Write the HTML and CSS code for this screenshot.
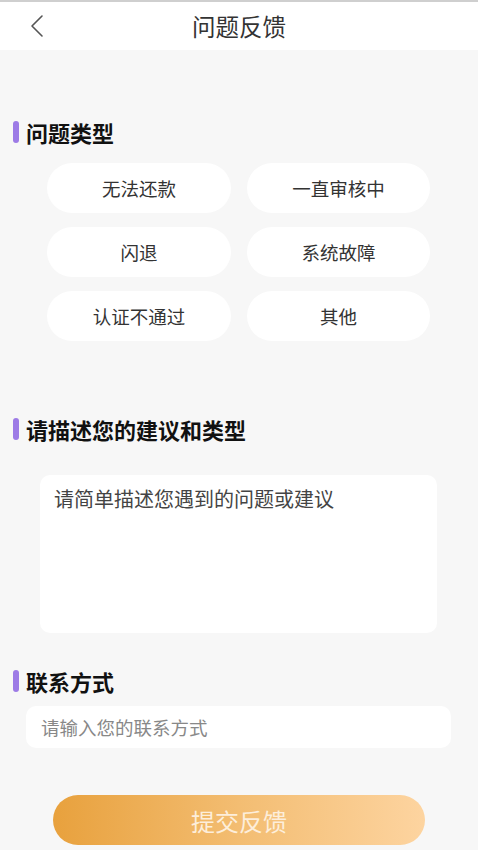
FILE: index.html
```html
<!DOCTYPE html>
<html lang="zh">
<head>
<meta charset="utf-8">
<title>问题反馈</title>
<link rel="stylesheet" href="styles.css">
</head>
<body>
<div class="page">
  <header class="topbar">
    <span class="back"><svg width="16" height="24" viewBox="0 0 16 24"><path d="M13 2 L3 12 L13 22" fill="none" stroke="#555" stroke-width="1.6" stroke-linecap="round" stroke-linejoin="round"/></svg></span>
    <h1 class="title">问题反馈</h1>
  </header>

  <section class="sec sec-type">
    <h2 class="sec-title"><span class="bar"></span>问题类型</h2>
    <div class="tags">
      <div class="tag">无法还款</div>
      <div class="tag">一直审核中</div>
      <div class="tag">闪退</div>
      <div class="tag">系统故障</div>
      <div class="tag">认证不通过</div>
      <div class="tag">其他</div>
    </div>
  </section>

  <section class="sec sec-desc">
    <h2 class="sec-title"><span class="bar"></span>请描述您的建议和类型</h2>
    <div class="textarea">请简单描述您遇到的问题或建议</div>
  </section>

  <section class="sec sec-contact">
    <h2 class="sec-title"><span class="bar"></span>联系方式</h2>
    <div class="input">请输入您的联系方式</div>
  </section>

  <div class="submit-wrap">
    <div class="submit">提交反馈</div>
  </div>
</div>
</body>
</html>
```

FILE: styles.css
```css
* { box-sizing: border-box; }
html, body {
  margin: 0;
  padding: 0;
  background: #f7f7f7;
  font-family: "Noto Sans CJK SC", "Noto Sans", sans-serif;
}
.page {
  width: 478px;
  height: 850px;
  overflow: hidden;
  display: flex;
  flex-direction: column;
}
.topbar {
  height: 50px;
  background: #fff;
  border-top: 2px solid #cfcfcf;
  display: flex;
  align-items: center;
  justify-content: center;
  position: relative;
}
.back {
  position: absolute;
  left: 29px;
  top: 12px;
  display: flex;
}
.title {
  margin: 0;
  font-size: 23.5px;
  font-weight: 400;
  color: #333;
  line-height: 30px;
}
.sec-title {
  margin: 0;
  display: flex;
  align-items: center;
  font-size: 22px;
  font-weight: 700;
  color: #111;
  line-height: 22px;
  padding-left: 13px;
}
.bar {
  width: 6px;
  height: 22px;
  border-radius: 3px;
  background: #9d7be6;
  margin-right: 7px;
}
.sec-type { margin-top: 71px; }
.tags {
  margin: 20px 47px 0 47px;
  display: grid;
  grid-template-columns: 184px 183px;
  column-gap: 16px;
  row-gap: 14px;
}
.tag {
  height: 50px;
  border-radius: 25px;
  background: #fff;
  display: flex;
  align-items: center;
  justify-content: center;
  font-size: 18.5px;
  color: #333;
}
.sec-desc { margin-top: 77px; }
.textarea {
  margin: 35px 41px 0 40px;
  height: 158px;
  background: #fff;
  border-radius: 10px;
  padding: 10px 14px;
  font-size: 20px;
  line-height: 28px;
  color: #444;
}
.sec-contact { margin-top: 37px; }
.input {
  margin: 14px 27px 0 26px;
  height: 42px;
  background: #fff;
  border-radius: 10px;
  padding: 0 15px;
  display: flex;
  align-items: center;
  font-size: 18.5px;
  color: #888;
}
.submit-wrap {
  margin-top: 47px;
  display: flex;
  padding-left: 53px;
}
.submit {
  width: 372px;
  height: 50px;
  border-radius: 25px;
  background: linear-gradient(90deg, #e8a13d 0%, #f3bd72 50%, #fdd4a0 100%);
  display: flex;
  align-items: center;
  justify-content: center;
  font-size: 24px;
  color: #fdeedb;
}
```
